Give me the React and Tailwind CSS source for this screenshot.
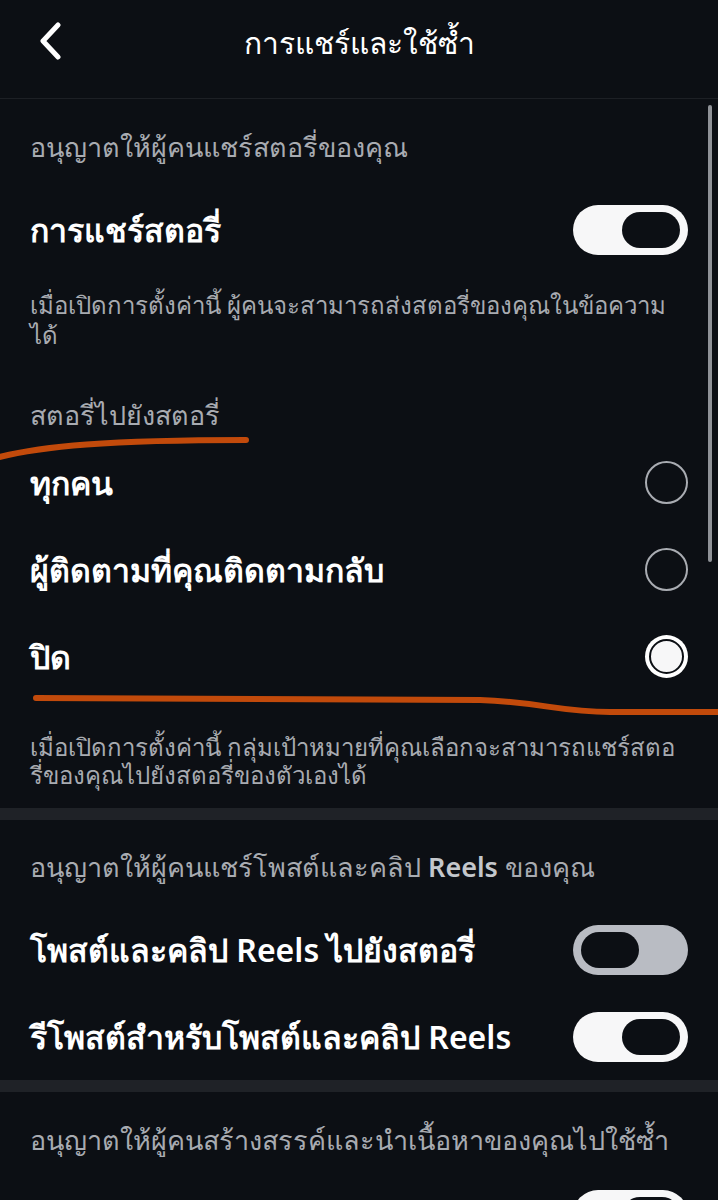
import React from 'react';

const font = { fontFamily: '"Noto Sans", "DejaVu Sans", "Liberation Sans", sans-serif' };

function Toggle({ on }) {
  return on ? (
    <div className="w-[115px] h-[50px] rounded-full bg-[#f7f7f8] flex items-center justify-end pr-[8px]">
      <div className="w-[58px] h-[36px] rounded-full bg-[#0c0f14]" />
    </div>
  ) : (
    <div className="w-[115px] h-[50px] rounded-full bg-[#b9bcc3] flex items-center justify-start pl-[8px]">
      <div className="w-[58px] h-[36px] rounded-full bg-[#0c0f14]" />
    </div>
  );
}

function Radio({ checked }) {
  return checked ? (
    <div className="w-[43px] h-[43px] rounded-full bg-white flex items-center justify-center">
      <div className="w-[35px] h-[35px] rounded-full border-2 border-[#0c0f14] bg-[#f7f7f8]" />
    </div>
  ) : (
    <div className="w-[43px] h-[43px] rounded-full border-2 border-[#a9acb2]" />
  );
}

function SectionLabel({ children, className = '' }) {
  return <div className={`text-[27px] text-[#a8abb1] leading-[36px] whitespace-nowrap ${className}`}>{children}</div>;
}

function Row({ label, children }) {
  return (
    <div className="flex items-center justify-between h-[87px] pr-[30px]">
      <span className="text-[32px] font-semibold text-white whitespace-nowrap">{label}</span>
      {children}
    </div>
  );
}

export default function App() {
  return (
    <div className="relative w-[718px] h-[1200px] overflow-hidden bg-[#0c0f14]" style={font}>
      <header className="h-[99px] flex items-center relative border-b border-[#1d2025]">
        <svg className="absolute left-[38px] top-[22px]" width="26" height="38" viewBox="0 0 26 38" fill="none">
          <path d="M20 3 L5 19 L20 35" stroke="white" strokeWidth="5" strokeLinecap="round" strokeLinejoin="round" />
        </svg>
        <h1 className="w-full text-center text-[30px] font-medium text-white -mt-[14px]">การแชร์และใช้ซ้ำ</h1>
      </header>

      <div className="absolute right-[6px] top-[105px] w-[4px] h-[457px] rounded-full bg-[#8f9297]" />

      <section className="pl-[30px] pt-[30px]">
        <SectionLabel>อนุญาตให้ผู้คนแชร์สตอรี่ของคุณ</SectionLabel>
        <div className="mt-[27px] flex items-center justify-between h-[76px] pr-[30px]">
          <span className="text-[32px] font-semibold text-white">การแชร์สตอรี่</span>
          <Toggle on />
        </div>
        <p className="mt-[22px] text-[24px] leading-[30px] text-[#a8abb1] pr-[30px]">
          เมื่อเปิดการตั้งค่านี้ ผู้คนจะสามารถส่งสตอรี่ของคุณในข้อความได้
        </p>
        <SectionLabel className="mt-[47px]">สตอรี่ไปยังสตอรี่</SectionLabel>
        <div className="mt-[6px]">
          <Row label="ทุกคน"><Radio /></Row>
          <Row label="ผู้ติดตามที่คุณติดตามกลับ"><Radio /></Row>
          <Row label="ปิด"><Radio checked /></Row>
        </div>
        <p className="mt-[33px] text-[24px] leading-[28px] text-[#a8abb1] pr-[30px]">
          เมื่อเปิดการตั้งค่านี้ กลุ่มเป้าหมายที่คุณเลือกจะสามารถแชร์สตอรี่ของคุณไปยังสตอรี่ของตัวเองได้
        </p>
      </section>

      <div className="mt-[19px] h-[12px] bg-[#1f2227]" />

      <section className="pl-[30px] pt-[29px]">
        <SectionLabel>
          อนุญาตให้ผู้คนแชร์โพสต์และคลิป <span className="font-semibold text-[#c4c7cc]">Reels</span> ของคุณ
        </SectionLabel>
        <div className="mt-[21px]">
          <Row label="โพสต์และคลิป Reels ไปยังสตอรี่"><Toggle /></Row>
          <Row label="รีโพสต์สำหรับโพสต์และคลิป Reels"><Toggle on /></Row>
        </div>
      </section>

      <div className="h-[12px] bg-[#1f2227]" />

      <section className="pl-[30px] pt-[30px]">
        <SectionLabel>อนุญาตให้ผู้คนสร้างสรรค์และนำเนื้อหาของคุณไปใช้ซ้ำ</SectionLabel>
        <div className="flex justify-end pr-[30px] mt-[32px]">
          <Toggle on />
        </div>
      </section>

      <svg className="absolute left-0 top-0 pointer-events-none" width="718" height="1200" viewBox="0 0 718 1200" fill="none">
        <path d="M-4 458 C 40 446, 110 440, 246 440" stroke="#c24a0b" strokeWidth="6" strokeLinecap="round" />
        <path d="M36 698 L 480 700 C 540 702, 560 712, 610 712 L 722 712" stroke="#c24a0b" strokeWidth="6" strokeLinecap="round" />
      </svg>
    </div>
  );
}
